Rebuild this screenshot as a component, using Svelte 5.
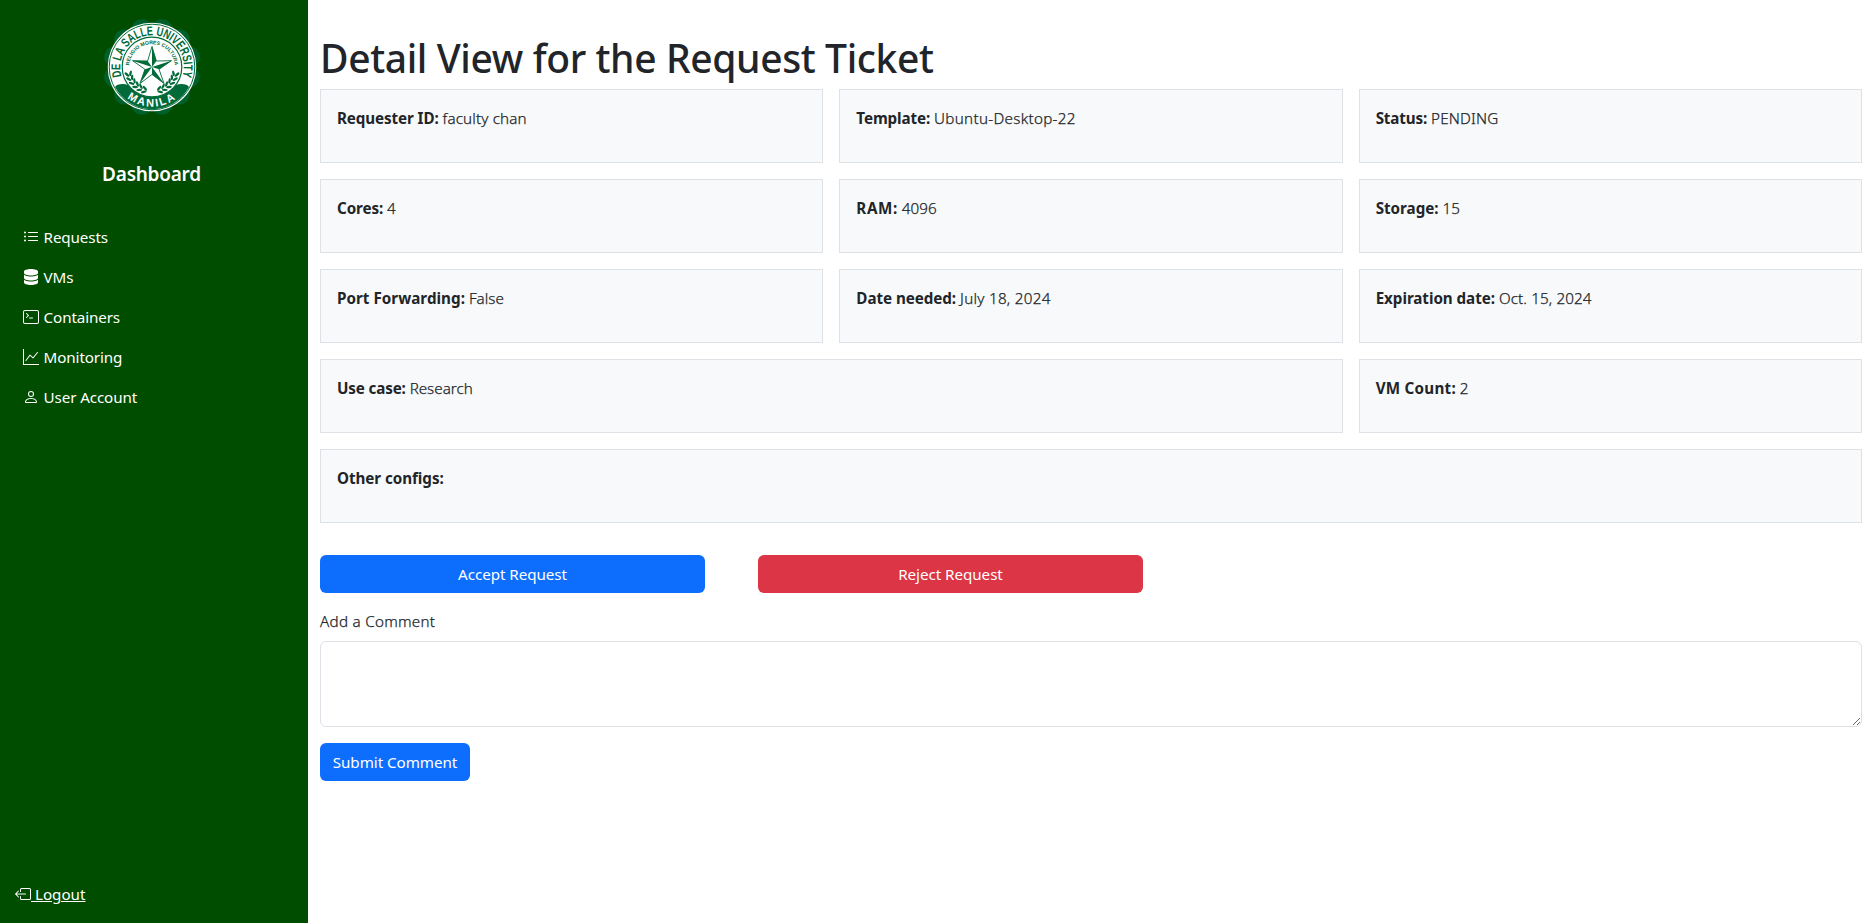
<script>
  const nav = [
    { label: 'Requests', icon: 'list' },
    { label: 'VMs', icon: 'database' },
    { label: 'Containers', icon: 'terminal' },
    { label: 'Monitoring', icon: 'graph' },
    { label: 'User Account', icon: 'person' }
  ];

  const icons = {
    list: ['M5 11.5a.5.5 0 0 1 .5-.5h9a.5.5 0 0 1 0 1h-9a.5.5 0 0 1-.5-.5m0-4a.5.5 0 0 1 .5-.5h9a.5.5 0 0 1 0 1h-9a.5.5 0 0 1-.5-.5m0-4a.5.5 0 0 1 .5-.5h9a.5.5 0 0 1 0 1h-9a.5.5 0 0 1-.5-.5m-3 1a1 1 0 1 0 0-2 1 1 0 0 0 0 2m0 4a1 1 0 1 0 0-2 1 1 0 0 0 0 2m0 4a1 1 0 1 0 0-2 1 1 0 0 0 0 2'],
    database: ['M448 80v48c0 44.2-100.3 80-224 80S0 172.2 0 128V80C0 35.8 100.3 0 224 0S448 35.8 448 80zM393.2 214.7c20.8-7.4 39.9-16.9 54.8-28.6V288c0 44.2-100.3 80-224 80S0 332.2 0 288V186.1c14.9 11.8 34 21.2 54.8 28.6C99.7 230.7 159.5 240 224 240s124.3-9.3 169.2-25.3zM0 346.1c14.9 11.8 34 21.2 54.8 28.6C99.7 390.7 159.5 400 224 400s124.3-9.3 169.2-25.3c20.8-7.4 39.9-16.9 54.8-28.6V432c0 44.2-100.3 80-224 80S0 476.2 0 432V346.1z'],
    terminal: [
      'M6 9a.5.5 0 0 1 .5-.5h3a.5.5 0 0 1 0 1h-3A.5.5 0 0 1 6 9M3.854 4.146a.5.5 0 1 0-.708.708L4.793 6.5 3.146 8.146a.5.5 0 1 0 .708.708l2-2a.5.5 0 0 0 0-.708z',
      'M2 1a2 2 0 0 0-2 2v10a2 2 0 0 0 2 2h12a2 2 0 0 0 2-2V3a2 2 0 0 0-2-2zm12 1a1 1 0 0 1 1 1v10a1 1 0 0 1-1 1H2a1 1 0 0 1-1-1V3a1 1 0 0 1 1-1z'
    ],
    graph: ['M0 0h1v15h15v1H0zm14.817 3.113a.5.5 0 0 1 .07.704l-4.5 5.5a.5.5 0 0 1-.74.037L7.06 6.767l-3.656 5.027a.5.5 0 0 1-.808-.588l4-5.5a.5.5 0 0 1 .758-.06l2.609 2.61 4.15-5.073a.5.5 0 0 1 .704-.07'],
    person: ['M8 8a3 3 0 1 0 0-6 3 3 0 0 0 0 6m2-3a2 2 0 1 1-4 0 2 2 0 0 1 4 0m4 8c0 1-1 1-1 1H3s-1 0-1-1 1-4 6-4 6 3 6 4m-1-.004c-.001-.246-.154-.986-.832-1.664C11.516 10.68 10.289 10 8 10s-3.516.68-4.168 1.332c-.678.678-.83 1.418-.832 1.664z'],
    logout: [
      'M6 12.5a.5.5 0 0 0 .5.5h8a.5.5 0 0 0 .5-.5v-9a.5.5 0 0 0-.5-.5h-8a.5.5 0 0 0-.5.5v2a.5.5 0 0 1-1 0v-2A1.5 1.5 0 0 1 6.5 2h8A1.5 1.5 0 0 1 16 3.5v9a1.5 1.5 0 0 1-1.5 1.5h-8A1.5 1.5 0 0 1 5 12.5v-2a.5.5 0 0 1 1 0z',
      'M.146 8.354a.5.5 0 0 1 0-.708l3-3a.5.5 0 1 1 .708.708L1.707 7.5H10.5a.5.5 0 0 1 0 1H1.707l2.147 2.146a.5.5 0 0 1-.708.708z'
    ]
  };

  // The database glyph is drawn on a 448x512 grid, the others on 16x16.
  const boxes = { database: '-32 0 512 512' };

  // track and loose are the letter spacings, in px, of a label and its value.
  const fields = [
    { label: 'Requester ID:', value: 'faculty chan', track: -0.1, loose: 0.16 },
    { label: 'Template:', value: 'Ubuntu-Desktop-22', track: -0.1, loose: 0.3 },
    { label: 'Status:', value: 'PENDING', track: -0.15, loose: 0.2 },
    { label: 'Cores:', value: '4', track: -0.1, loose: 0 },
    { label: 'RAM:', value: '4096', track: 0.6, loose: 0.1 },
    { label: 'Storage:', value: '15', track: 0, loose: 0 },
    { label: 'Port Forwarding:', value: 'False', track: 0.04, loose: 0 },
    { label: 'Date needed:', value: 'July 18, 2024', track: -0.05, loose: 0.28 },
    { label: 'Expiration date:', value: 'Oct. 15, 2024', track: -0.05, loose: 0.12 },
    { label: 'Use case:', value: 'Research', track: -0.15, loose: 0, span: 2 },
    { label: 'VM Count:', value: '2', track: 0.25, loose: 0 },
    { label: 'Other configs:', value: '', track: -0.05, loose: 0, span: 3 }
  ];

  // Seal geometry: the star has ten facets, half of them filled.
  const point = (r, deg) => {
    const a = (deg - 90) * Math.PI / 180;
    return `${(r * Math.cos(a)).toFixed(2)},${(r * Math.sin(a)).toFixed(2)}`;
  };
  const star = Array.from({ length: 10 }, (_, i) => point(i % 2 ? 7.4 : 20.5, i * 36)).join(' ');
  const facets = Array.from({ length: 5 }, (_, i) => `0,0 ${point(20.5, i * 72)} ${point(7.4, i * 72 + 36)}`);
  const scallops = Array.from({ length: 12 }, (_, i) => point(38.5, 15 + i * 30).split(','));
  const leaves = [108, 119, 130, 141, 152, 163];
</script>

{#snippet icon(name)}
  <svg class="icon" viewBox={boxes[name] ?? '0 0 16 16'} fill="currentColor" aria-hidden="true">
    {#each icons[name] as d}<path {d} />{/each}
  </svg>
{/snippet}

{#snippet branch()}
  {#each leaves as d}
    <g transform="rotate({d})" fill="#006a38">
      <ellipse cx="-.6" cy="-26.2" rx="2.9" ry="1.2" transform="rotate(32 -.6 -26.2)" />
      <ellipse cx="-.6" cy="-22.4" rx="2.9" ry="1.2" transform="rotate(-32 -.6 -22.4)" />
    </g>
  {/each}
{/snippet}

<div class="page">
  <aside>
    <svg class="seal" viewBox="-50 -50 100 100">
      <defs>
        <path id="arc-top" d="M0 31.8A31.8 31.8 0 0 1 0 -31.8A31.8 31.8 0 0 1 0 31.8" />
        <path id="arc-motto" d="M0 22.8A22.8 22.8 0 0 1 0 -22.8A22.8 22.8 0 0 1 0 22.8" />
        <path id="arc-bottom" d="M-39.6 0A39.6 39.6 0 0 0 39.6 0" />
      </defs>
      {#each scallops as [x, y]}<circle cx={x} cy={y} r="10.6" fill="#00602c" />{/each}
      <circle r="44.3" fill="#fff" />
      <circle r="42.8" fill="none" stroke="#006a38" stroke-width="1" />
      <path d="M-35 18Q-29 16 -24 18Q-14 30 0 30Q14 30 24 18Q29 16 35 18L37 20A42 42 0 0 1-37 20Z" fill="#006a38" />
      <circle r="29.8" fill="#fff" stroke="#006a38" stroke-width="1.2" />
      <text class="ring" text-anchor="middle" textLength="119" lengthAdjust="spacingAndGlyphs"><textPath href="#arc-top" startOffset="50%">DE LA SALLE UNIVERSITY</textPath></text>
      <text class="motto" text-anchor="middle"><textPath href="#arc-motto" startOffset="50%">RELIGIO MORES CULTURA</textPath></text>
      <text class="city" text-anchor="middle"><textPath href="#arc-bottom" startOffset="50%">MANILA</textPath></text>
      {@render branch()}
      <g transform="scale(-1 1)">{@render branch()}</g>
      <polygon points={star} fill="#fff" stroke="#006a38" stroke-width=".9" />
      {#each facets as points}<polygon {points} fill="#006a38" />{/each}
    </svg>
    <h2>Dashboard</h2>
    <nav>
      {#each nav as item}
        <a href="#top">{@render icon(item.icon)}<span>{item.label}</span></a>
      {/each}
    </nav>
    <a class="logout" href="#top">{@render icon('logout')}<span>&nbsp;Logout</span></a>
  </aside>

  <main>
    <h1>Detail View for the Request Ticket</h1>
    <section class="grid">
      {#each fields as f}
        <div class="cell" class:two={f.span === 2} class:three={f.span === 3}>
          <strong style:letter-spacing="{f.track}px">{f.label}</strong> <span class="light" style:letter-spacing="{f.loose}px">{f.value}</span>
        </div>
      {/each}
    </section>
    <div class="actions">
      <button class="primary">Accept Request</button>
      <button class="danger">Reject Request</button>
    </div>
    <label class="light" for="comment">Add a Comment</label>
    <textarea id="comment"></textarea>
    <button class="primary submit">Submit Comment</button>
  </main>
</div>

<style>
  :global(body) {
    margin: 0;
    background: #fff;
  }
  .page {
    display: flex;
    height: 923px;
    box-sizing: border-box;
    font: 400 15.2px/24px 'Noto Sans', sans-serif;
    color: #212529;
    overflow: hidden;
  }
  aside {
    width: 308px;
    flex: none;
    box-sizing: border-box;
    background: #004d00;
    color: #fff;
    display: flex;
    flex-direction: column;
    padding: 17px 0 0;
  }
  .seal {
    width: 100px;
    height: 100px;
    margin-left: 102px;
    display: block;
  }
  .seal text {
    font-family: 'Liberation Sans', sans-serif;
    fill: #006a38;
  }
  .seal .ring {
    font-size: 12.8px;
    font-weight: 700;
  }
  .seal .motto {
    font-size: 5.2px;
    font-weight: 700;
  }
  .seal .city {
    font-size: 11px;
    font-weight: 700;
    fill: #fff;
    letter-spacing: 1.8px;
  }
  h2 {
    margin: 45px 0 0;
    width: 303px;
    text-align: center;
    font-size: 19px;
    line-height: 24px;
    font-weight: 600;
    letter-spacing: -0.25px;
  }
  nav {
    margin-top: 31px;
  }
  nav a {
    display: flex;
    align-items: center;
    height: 40px;
    padding-left: 23px;
    gap: 4.6px;
    color: #fff;
    text-decoration: none;
    letter-spacing: -0.12px;
  }
  .icon {
    width: 16px;
    height: 16px;
    flex: none;
  }
  .logout {
    margin: auto 0 17px 15px;
    display: flex;
    align-items: center;
    color: #fff;
    text-decoration: none;
  }
  .logout span {
    text-decoration: underline;
  }
  main {
    flex: 1;
    padding: 34px 11px 0 12px;
  }
  h1 {
    margin: 0 0 7px;
    font-size: 39px;
    line-height: 48px;
    font-weight: 500;
    letter-spacing: -0.37px;
  }
  .grid {
    display: grid;
    grid-template-columns: repeat(3, 1fr);
    grid-auto-rows: 74px;
    gap: 16px;
  }
  .cell {
    box-sizing: border-box;
    border: 1px solid #dee2e6;
    background: #f8f9fa;
    padding: 16px;
  }
  .cell strong {
    font-weight: 700;
  }
  .light {
    font-weight: 300;
    -webkit-text-stroke: 0.25px #212529;
  }
  .two {
    grid-column: span 2;
  }
  .three {
    grid-column: span 3;
  }
  .actions {
    display: flex;
    gap: 53px;
    margin-top: 32px;
  }
  button {
    font: inherit;
    color: #fff;
    border: 0;
    border-radius: 6px;
    height: 38px;
    padding: 0;
    letter-spacing: -0.05px;
  }
  .actions button {
    width: 385px;
  }
  .primary {
    background: #0d6efd;
  }
  .danger {
    background: #dc3545;
  }
  label {
    display: block;
    margin: 16px 0 8px;
    letter-spacing: 0.28px;
  }
  textarea {
    display: block;
    box-sizing: border-box;
    width: 100%;
    height: 86px;
    border: 1px solid #dee2e6;
    border-radius: 6px;
    background: #fff;
    resize: vertical;
  }
  .submit {
    display: block;
    width: 150px;
    margin-top: 16px;
  }
</style>
